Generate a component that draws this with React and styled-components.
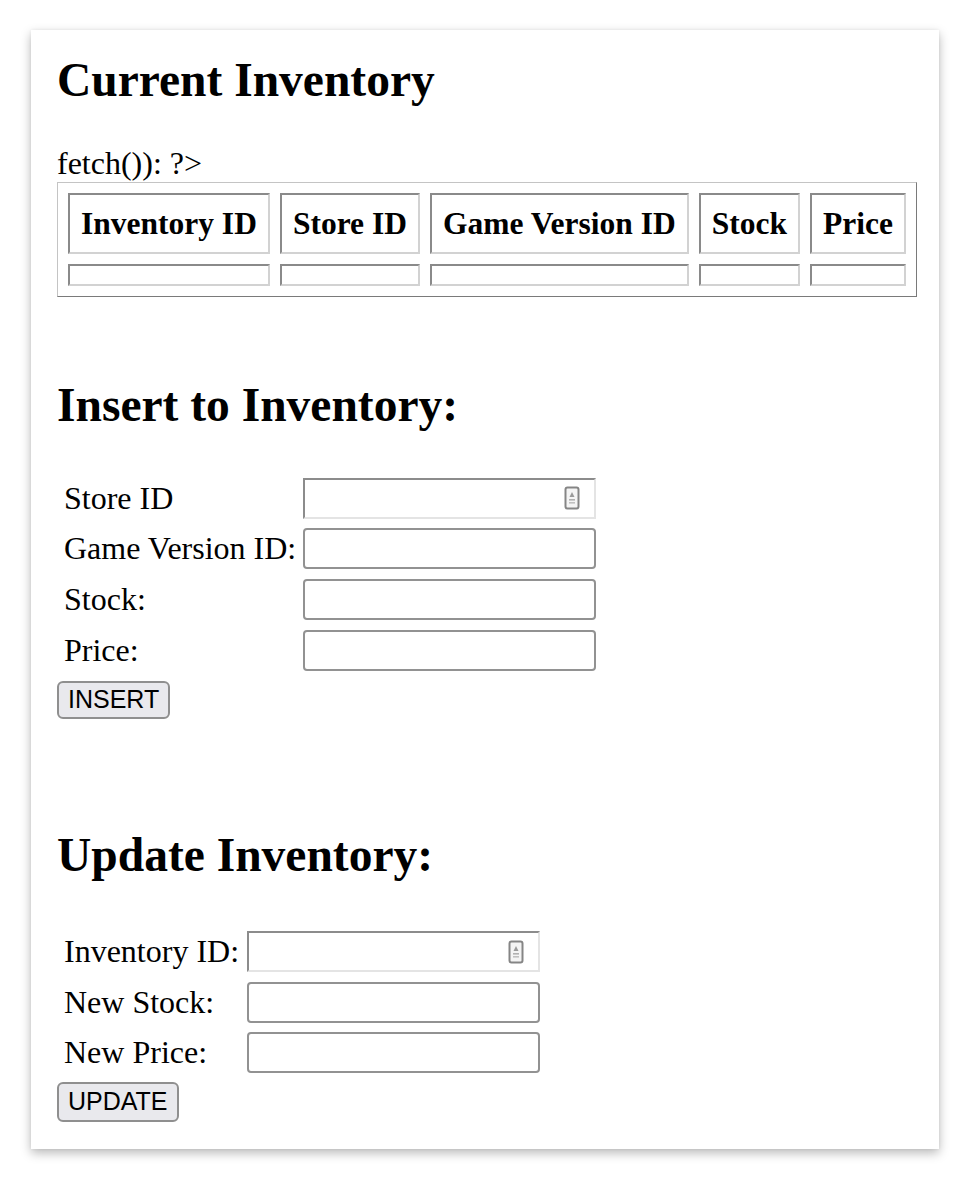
import React from "react";
import styled, { createGlobalStyle } from "styled-components";

const Global = createGlobalStyle`
  html, body { margin: 0; padding: 0; background: #ffffff; }
  body { font-family: "Liberation Serif", "Times New Roman", serif; color: #000; }
`;

const Page = styled.div`
  padding: 30px 39px 32px 31px;
`;

const Card = styled.main`
  width: 908px;
  box-sizing: border-box;
  background: #ffffff;
  padding: 22.7px 23px 27px 26px;
  box-shadow: 0 4px 10px rgba(0, 0, 0, 0.28), 0 0 3px rgba(0, 0, 0, 0.06);
`;

const Heading = styled.h2`
  margin: ${(p) => p.$top || 0}px 0 0 0;
  font-size: 47.5px;
  font-weight: bold;
  line-height: normal;
`;

const Text = styled.div`
  margin-top: 38.7px;
  font-size: 32px;
  line-height: normal;
`;

const Table = styled.table`
  border-collapse: separate;
  border-spacing: 10px 10px;
  border-style: solid;
  border-width: 1px;
  border-color: #c4c4c4 #7a7a7a #7a7a7a #c4c4c4;
  font-size: 31.5px;
`;

const Th = styled.th`
  padding: 10.5px 11px;
  font-weight: bold;
  line-height: normal;
  border-style: solid;
  border-width: 2px;
  border-color: #8a8a8a #d2d2d2 #d2d2d2 #8a8a8a;
  white-space: nowrap;
`;

const Td = styled.td`
  padding: 9px 11px;
  border-style: solid;
  border-width: 2px;
  border-color: #8a8a8a #d2d2d2 #d2d2d2 #8a8a8a;
`;

const Form = styled.form`
  margin-top: ${(p) => p.$top}px;
  display: flex;
  flex-direction: column;
  align-items: flex-start;
`;

const Fields = styled.div`
  display: grid;
  grid-template-columns: auto 293px;
  column-gap: ${(p) => p.$gap}px;
  row-gap: 9.67px;
  align-items: center;
  padding-left: 7px;
  font-size: 32px;
`;

const Label = styled.label`
  line-height: normal;
  white-space: nowrap;
`;

const Input = styled.input`
  box-sizing: border-box;
  width: 293px;
  height: 41px;
  margin: 0;
  padding: 2px 6px;
  border: 2px solid #929292;
  border-radius: 4px;
  background: #fff;
  font-size: 26px;
  font-family: "Liberation Sans", Arial, sans-serif;
  outline: none;
`;

const NumberBox = styled.div`
  box-sizing: border-box;
  width: 293px;
  height: 41px;
  display: flex;
  align-items: center;
  border-style: solid;
  border-width: 2px;
  border-color: #8c8c8c #e4e4e4 #e4e4e4 #8c8c8c;
  background: #fff;
  padding-right: 14px;
`;

const BareInput = styled.input`
  flex: 1;
  min-width: 0;
  height: 100%;
  border: none;
  margin: 0;
  padding: 0 6px;
  background: transparent;
  font-size: 26px;
  outline: none;
`;

const Button = styled.button`
  margin-top: ${(p) => p.$top}px;
  box-sizing: border-box;
  height: ${(p) => p.$h}px;
  padding: 0 9px;
  font-family: "Liberation Sans", Arial, sans-serif;
  font-size: 25px;
  color: #000;
  background: #e9e9ed;
  border: 2px solid #8f8f8f;
  border-radius: 6px;
`;

const Spin = () => (
  <svg width="16" height="24" viewBox="0 0 16 24" aria-hidden="true">
    <rect x="1.5" y="1.5" width="13" height="21" rx="2" fill="#f4f4f4" stroke="#858585" strokeWidth="2" />
    <path d="M8 6 L10.5 11 L5.5 11 Z" fill="#9a9a9a" />
    <rect x="5" y="13" width="6" height="1.6" fill="#b0b0b0" />
    <rect x="5" y="16" width="6" height="1.6" fill="#c0c0c0" />
  </svg>
);

const NumberField = () => (
  <NumberBox>
    <BareInput type="text" />
    <Spin />
  </NumberBox>
);

export default function App() {
  const cols = ["Inventory ID", "Store ID", "Game Version ID", "Stock", "Price"];
  return (
    <Page>
      <Global />
      <Card>
        <Heading>Current Inventory</Heading>
        <Text>{"fetch()): ?>"}</Text>
        <Table>
          <thead>
            <tr>
              {cols.map((c) => (
                <Th key={c}>{c}</Th>
              ))}
            </tr>
          </thead>
          <tbody>
            <tr>
              {cols.map((c) => (
                <Td key={c} />
              ))}
            </tr>
          </tbody>
        </Table>

        <Heading $top={80.7}>Insert to Inventory:</Heading>
        <Form $top={45.7} onSubmit={(e) => e.preventDefault()}>
          <Fields $gap={7}>
            <Label>Store ID</Label>
            <NumberField />
            <Label>Game Version ID:</Label>
            <Input type="text" />
            <Label>Stock:</Label>
            <Input type="text" />
            <Label>Price:</Label>
            <Input type="text" />
          </Fields>
          <Button $top={10} $h={38}>INSERT</Button>
        </Form>

        <Heading $top={109.7}>Update Inventory:</Heading>
        <Form $top={48.7} onSubmit={(e) => e.preventDefault()}>
          <Fields $gap={8}>
            <Label>Inventory ID:</Label>
            <NumberField />
            <Label>New Stock:</Label>
            <Input type="text" />
            <Label>New Price:</Label>
            <Input type="text" />
          </Fields>
          <Button $top={8.5} $h={40}>UPDATE</Button>
        </Form>
      </Card>
    </Page>
  );
}
